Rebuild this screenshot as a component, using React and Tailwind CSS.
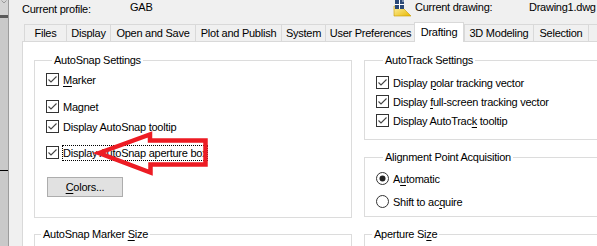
import React from "react";

function Check() {
  return (
    <svg width="13" height="13" viewBox="0 0 13 13" className="shrink-0">
      <rect x="0.5" y="0.5" width="12" height="12" fill="#fff" stroke="#333" />
      <path d="M2.5 6.5 L5 9 L10.5 3.5" fill="none" stroke="#444" strokeWidth="1.1" />
    </svg>
  );
}

function Radio({ on }) {
  return (
    <svg width="13" height="13" viewBox="0 0 13 13" className="shrink-0">
      <circle cx="6.5" cy="6.5" r="6" fill="#fff" stroke="#333" />
      {on && <circle cx="6.5" cy="6.5" r="3" fill="#222" />}
    </svg>
  );
}

function Row({ children, mt, radio, on, focus }) {
  return (
    <div className={"flex items-center gap-[4px] h-[15px] " + mt}>
      {radio ? <Radio on={on} /> : <Check />}
      <span
        className={
          "leading-[14px] whitespace-nowrap " +
          (focus ? "outline outline-1 outline-dotted outline-[#000] outline-offset-0" : "")
        }
      >
        {children}
      </span>
    </div>
  );
}

function Title({ children, ml }) {
  return (
    <div className={"-mt-[8px] w-fit bg-white px-[2px] leading-[14px] whitespace-nowrap " + ml}>
      {children}
    </div>
  );
}

const U = ({ children }) => <span className="underline underline-offset-[2px]">{children}</span>;

export default function App() {
  const tabs = [
    ["Files", "w-[42px]"],
    ["Display", "w-[44px]"],
    ["Open and Save", "w-[85px]"],
    ["Plot and Publish", "w-[86px]"],
    ["System", "w-[44px]"],
    ["User Preferences", "w-[90px]"],
    ["Drafting", "w-[50px]", true],
    ["3D Modeling", "w-[69px]"],
    ["Selection", "w-[55px]"],
    ["Profiles", "w-[60px]"],
  ];
  return (
    <div className="relative w-[597px] h-[246px] overflow-hidden flex bg-[#f0f0f0] text-black text-[11px] tracking-[-0.25px] font-['Liberation_Sans',Arial,sans-serif]">
      {/* left strip */}
      <div className="w-[9px] shrink-0 flex flex-col bg-[#c9c9c9] border-r border-[#9c9c9c]">
        <div className="h-[15px] bg-[#d4d4d4] flex justify-center">
          <svg width="6" height="4" viewBox="0 0 6 4">
            <path d="M0.5 0.5 L3 3 L5.5 0.5" fill="none" stroke="#9a9a9a" strokeWidth="1" />
          </svg>
        </div>
        <div className="h-[3px] bg-[#5a5a5a]" />
        <div className="h-[152px]" />
        <div className="h-px bg-black" />
        <div className="flex-1" />
      </div>

      {/* main */}
      <div className="flex-1 flex flex-col min-w-0">
        {/* header */}
        <div className="h-[22px] flex items-start pl-[13px] shrink-0">
          <span className="w-[108px] pt-[2px] leading-[14px] whitespace-nowrap">Current profile:</span>
          <span className="w-[263px] leading-[14px] whitespace-nowrap">GAB</span>
          <div className="w-[22px] h-[17px]">
            <svg width="19" height="17" viewBox="0 0 19 17">
              <defs>
                <linearGradient id="yg" x1="0" y1="0" x2="1" y2="1">
                  <stop offset="0" stopColor="#fff2a8" />
                  <stop offset="1" stopColor="#e8b800" />
                </linearGradient>
              </defs>
              <path d="M1 6 L10 8 L18 16 L1 16 Z" fill="url(#yg)" stroke="#c99a00" strokeWidth="0.6" />
              <rect x="2" y="0" width="9" height="9" fill="#2c4a78" />
              <path d="M6.5 0 V9 M2 4.5 H11" stroke="#fff" strokeWidth="1" />
              <path d="M9 1 L12 1" stroke="#fff" strokeWidth="0.8" />
            </svg>
          </div>
          <span className="w-[114px] leading-[14px] whitespace-nowrap">Current drawing:</span>
          <span className="leading-[14px] whitespace-nowrap">Drawing1.dwg</span>
        </div>

        {/* tabs */}
        <div className="h-[20px] -mb-px ml-[15px] flex items-end shrink-0 relative z-10">
          {tabs.map(([t, w, sel]) =>
            sel ? (
              <div
                key={t}
                className={
                  "h-[20px] shrink-0 bg-white border-t border-l border-r border-[#d9d9d9] -ml-px flex items-center justify-center whitespace-nowrap leading-[14px] pb-[2px] " +
                  w
                }
              >
                {t}
              </div>
            ) : (
              <div
                key={t}
                className={
                  "h-[17px] mb-[1px] shrink-0 bg-[#f0f0f0] border-t border-l border-[#d9d9d9] flex items-center justify-center whitespace-nowrap leading-[14px] " +
                  w
                }
              >
                {t}
              </div>
            )
          )}
        </div>

        {/* panel */}
        <div className="flex-1 ml-[13px] bg-white border-l border-t border-[#d9d9d9] pt-[18px] pl-[11px] flex gap-[12px]">
          {/* left column */}
          <div className="w-[318px] shrink-0 flex flex-col">
            <div className="h-[158px] border border-[#dcdcdc] pl-[11px]">
              <Title ml="ml-[6px]">AutoSnap Settings</Title>
              <Row mt="mt-[5px]">
                <U>M</U>arker
              </Row>
              <Row mt="mt-[12px]">Magnet</Row>
              <Row mt="mt-[5px]">Display AutoSnap tooltip</Row>
              <Row mt="mt-[11px]" focus>
                Display AutoSnap aperture box
              </Row>
              <div className="mt-[17px] ml-[1px] w-[76px] h-[20px] bg-[#e1e1e1] border border-[#adadad] flex items-center justify-center leading-[14px]">
                <span>
                  <U>C</U>olors...
                </span>
              </div>
            </div>
            <div className="mt-[16px] h-[60px] border border-[#dcdcdc] border-b-0">
              <Title ml="ml-[6px]">
                AutoSnap Marker <U>S</U>ize
              </Title>
            </div>
          </div>

          {/* right column */}
          <div className="w-[260px] shrink-0 flex flex-col">
            <div className="h-[80px] border border-[#dcdcdc] pl-[11px]">
              <Title ml="ml-[7px]">AutoTrack Settings</Title>
              <Row mt="mt-[8px]">
                Display <U>p</U>olar tracking vector
              </Row>
              <Row mt="mt-[4px]">
                Display <U>f</U>ull-screen tracking vector
              </Row>
              <Row mt="mt-[4px]">
                Display AutoTrac<U>k</U> tooltip
              </Row>
            </div>
            <div className="mt-[17px] h-[60px] border border-[#dcdcdc] pl-[11px]">
              <Title ml="ml-[7px]">Alignment Point Acquisition</Title>
              <Row mt="mt-[7px]" radio on>
                A<U>u</U>tomatic
              </Row>
              <Row mt="mt-[8px]" radio>
                Shift to ac<U>q</U>uire
              </Row>
            </div>
            <div className="mt-[17px] h-[60px] border border-[#dcdcdc] border-b-0">
              <Title ml="ml-[7px]">
                Aperture Si<U>z</U>e
              </Title>
            </div>
          </div>
        </div>
      </div>

      {/* red annotation arrow */}
      <svg
        className="absolute left-0 top-0 pointer-events-none z-20"
        width="597"
        height="246"
        viewBox="0 0 597 246"
      >
        <path
          d="M99 153 L150 134.5 L150 140.5 L205.5 140.5 L205.5 164.5 L150.5 164.5 L150.5 172.5 Z"
          fill="none"
          stroke="#ed1c24"
          strokeWidth="4.5"
          strokeLinejoin="miter"
          strokeMiterlimit="6"
        />
      </svg>
    </div>
  );
}
